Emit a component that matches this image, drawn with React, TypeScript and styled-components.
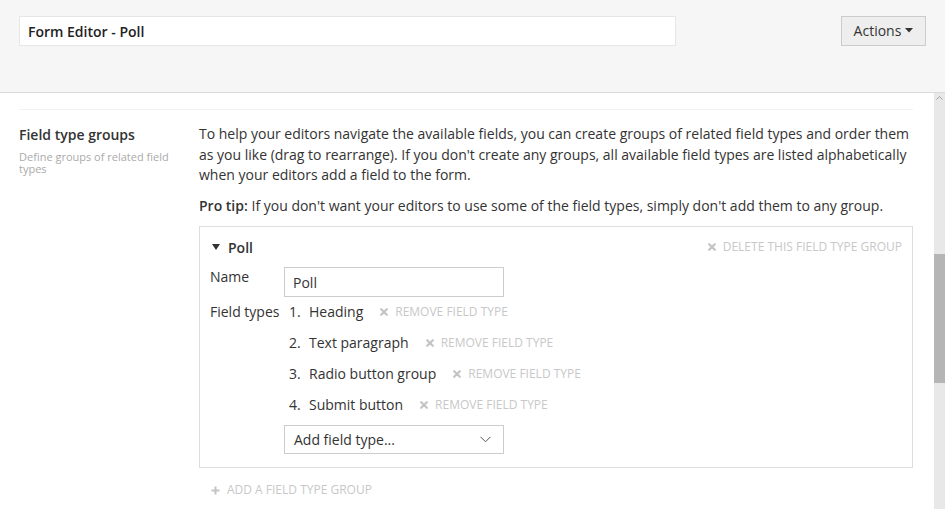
import React from "react";
import styled, { createGlobalStyle } from "styled-components";

const Global = createGlobalStyle`
  html, body { margin: 0; padding: 0; background: #fff; }
  body { font-family: "Open Sans", "Liberation Sans", sans-serif; color: #333; font-size: 14px; overflow: hidden; }
  * { box-sizing: border-box; }
`;

const Page = styled.div`
  width: 945px;
  height: 509px;
  display: flex;
  flex-direction: column;
  overflow: hidden;
`;

const Header = styled.header`
  height: 93px;
  flex: none;
  background: #f6f6f6;
  border-bottom: 1px solid #dadada;
  display: flex;
  align-items: flex-start;
  justify-content: space-between;
  padding: 16px 19px 0 19px;
`;

const TitleInput = styled.div`
  width: 657px;
  height: 30px;
  background: #fff;
  border: 1px solid #e6e6e6;
  padding: 0 8px;
  display: flex;
  align-items: center;
  font-weight: 600;
  font-size: 14px;
  color: #222;
`;

const ActionsButton = styled.button`
  width: 85px;
  height: 30px;
  background: #eeeeee;
  border: 1px solid #cccccc;
  font-family: inherit;
  font-size: 14px;
  color: #333;
  display: flex;
  align-items: center;
  justify-content: center;
  gap: 4px;
  padding: 0 0 1px;
`;

const Body = styled.div`
  flex: 1;
  display: flex;
  min-height: 0;
`;

const Content = styled.main`
  flex: 1;
  padding: 16px 21px 0 19px;
  overflow: hidden;
`;

const Divider = styled.div`
  border-top: 1px solid #f2f2f2;
  margin-bottom: 15px;
`;

const Section = styled.section`
  display: grid;
  grid-template-columns: 160px 1fr;
  column-gap: 20px;
`;

const SideTitle = styled.h3`
  margin: 0;
  font-size: 14px;
  font-weight: 600;
  line-height: 20px;
  color: #333;
`;

const SideDesc = styled.p`
  margin: 6px 0 0;
  font-size: 11px;
  line-height: 12px;
  color: #aaa;
`;

const Para = styled.p`
  margin: 0 0 10px;
  line-height: 20.5px;
  font-size: 14px;
  color: #333;
  margin-top: -1px;
  & + & { margin-top: 0; }
`;

const Strong = styled.b`
  font-weight: 600;
`;

const GroupBox = styled.div`
  border: 1px solid #dddddd;
  padding: 10px 10px 13px 10px;
`;

const GroupHead = styled.div`
  display: flex;
  align-items: center;
  justify-content: space-between;
  height: 20px;
  margin-bottom: 10px;
`;

const GroupTitle = styled.div`
  display: flex;
  align-items: center;
  gap: 8px;
  padding-left: 2px;
  font-weight: 600;
  font-size: 14px;
  color: #333;
`;

const MutedLink = styled.span`
  display: inline-flex;
  align-items: center;
  gap: 7px;
  font-size: 12px;
  line-height: 16px;
  text-transform: uppercase;
  color: #c8c8c8;
  white-space: nowrap;
`;

const Row = styled.div`
  display: grid;
  grid-template-columns: 74px 220px;
  align-items: start;
`;

const Label = styled.div<{ $top: number }>`
  padding-top: ${(p) => p.$top}px;
  line-height: 20px;
  font-size: 14px;
  color: #333;
  white-space: nowrap;
`;

const TextBox = styled.div`
  height: 30px;
  border: 1px solid #cccccc;
  padding: 0 8px;
  display: flex;
  align-items: center;
  padding-top: 1px;
  font-size: 14px;
  color: #333;
`;

const Items = styled.div`
  padding-top: 5px;
  display: flex;
  flex-direction: column;
  gap: 11px;
`;

const Item = styled.div`
  display: flex;
  align-items: center;
  line-height: 20px;
  padding-left: 5px;
  white-space: nowrap;
  font-size: 14px;
  color: #333;
`;

const Num = styled.span`
  width: 20px;
  flex: none;
`;

const ItemName = styled.span`
  margin-right: 17px;
`;

const Select = styled.div`
  height: 29px;
  width: 220px;
  margin-top: -1px;
  border: 1px solid #cccccc;
  padding: 0 12px 1px 9px;
  display: flex;
  align-items: center;
  justify-content: space-between;
  font-size: 14px;
  color: #333;
`;

const AddGroup = styled.div`
  display: flex;
  padding: 14px 0 0 12px;
`;

const Track = styled.div`
  width: 11px;
  flex: none;
  background: #e8e8e8;
  display: flex;
  flex-direction: column;
  align-items: center;
  padding-top: 3px;
`;

const Thumb = styled.div`
  width: 11px;
  height: 129px;
  background: #b5b5b5;
  margin-top: 154px;
`;

const Cross = () => (
  <svg width="8" height="8" viewBox="0 0 8 8">
    <path d="M1.2 1.2 L6.8 6.8 M6.8 1.2 L1.2 6.8" stroke="#c4c4c4" strokeWidth="2.2" strokeLinecap="round" />
  </svg>
);

const Plus = () => (
  <svg width="9" height="9" viewBox="0 0 9 9">
    <path d="M4.5 0.5 V8.5 M0.5 4.5 H8.5" stroke="#c4c4c4" strokeWidth="2" />
  </svg>
);

const fieldTypes = ["Heading", "Text paragraph", "Radio button group", "Submit button"];

export default function App() {
  return (
    <Page>
      <Global />
      <Header>
        <TitleInput>Form Editor - Poll</TitleInput>
        <ActionsButton>
          Actions
          <svg width="8" height="5" viewBox="0 0 8 5">
            <path d="M0 0 H8 L4 4.5 Z" fill="#333" />
          </svg>
        </ActionsButton>
      </Header>
      <Body>
        <Content>
          <Divider />
          <Section>
            <div>
              <SideTitle>Field type groups</SideTitle>
              <SideDesc>Define groups of related field types</SideDesc>
            </div>
            <div>
              <Para>
                To help your editors navigate the available fields, you can create groups of related field types and order them as you like (drag to rearrange). If you don't create any groups, all available field types are listed alphabetically when your editors add a field to the form.
              </Para>
              <Para>
                <Strong>Pro tip:</Strong> If you don't want your editors to use some of the field types, simply don't add them to any group.
              </Para>
              <GroupBox>
                <GroupHead>
                  <GroupTitle>
                    <svg width="8" height="6" viewBox="0 0 8 6">
                      <path d="M0 0 H8 L4 6 Z" fill="#333" />
                    </svg>
                    Poll
                  </GroupTitle>
                  <MutedLink>
                    <Cross />
                    Delete this field type group
                  </MutedLink>
                </GroupHead>
                <Row>
                  <Label $top={0}>Name</Label>
                  <TextBox>Poll</TextBox>
                </Row>
                <Row>
                  <Label $top={5}>Field types</Label>
                  <Items>
                    {fieldTypes.map((f, i) => (
                      <Item key={f}>
                        <Num>{i + 1}.</Num>
                        <ItemName>{f}</ItemName>
                        <MutedLink>
                          <Cross />
                          Remove field type
                        </MutedLink>
                      </Item>
                    ))}
                    <Select>
                      Add field type...
                      <svg width="11" height="7" viewBox="0 0 11 7">
                        <path d="M0.5 0.8 L5.5 5.8 L10.5 0.8" stroke="#555" strokeWidth="1" fill="none" />
                      </svg>
                    </Select>
                  </Items>
                </Row>
              </GroupBox>
              <AddGroup>
                <MutedLink>
                  <Plus />
                  Add a field type group
                </MutedLink>
              </AddGroup>
            </div>
          </Section>
        </Content>
        <Track>
          <svg width="7" height="4" viewBox="0 0 7 4">
            <path d="M0.5 3.5 L3.5 0.5 L6.5 3.5" stroke="#a0a0a0" strokeWidth="1" fill="none" />
          </svg>
          <Thumb />
        </Track>
      </Body>
    </Page>
  );
}
